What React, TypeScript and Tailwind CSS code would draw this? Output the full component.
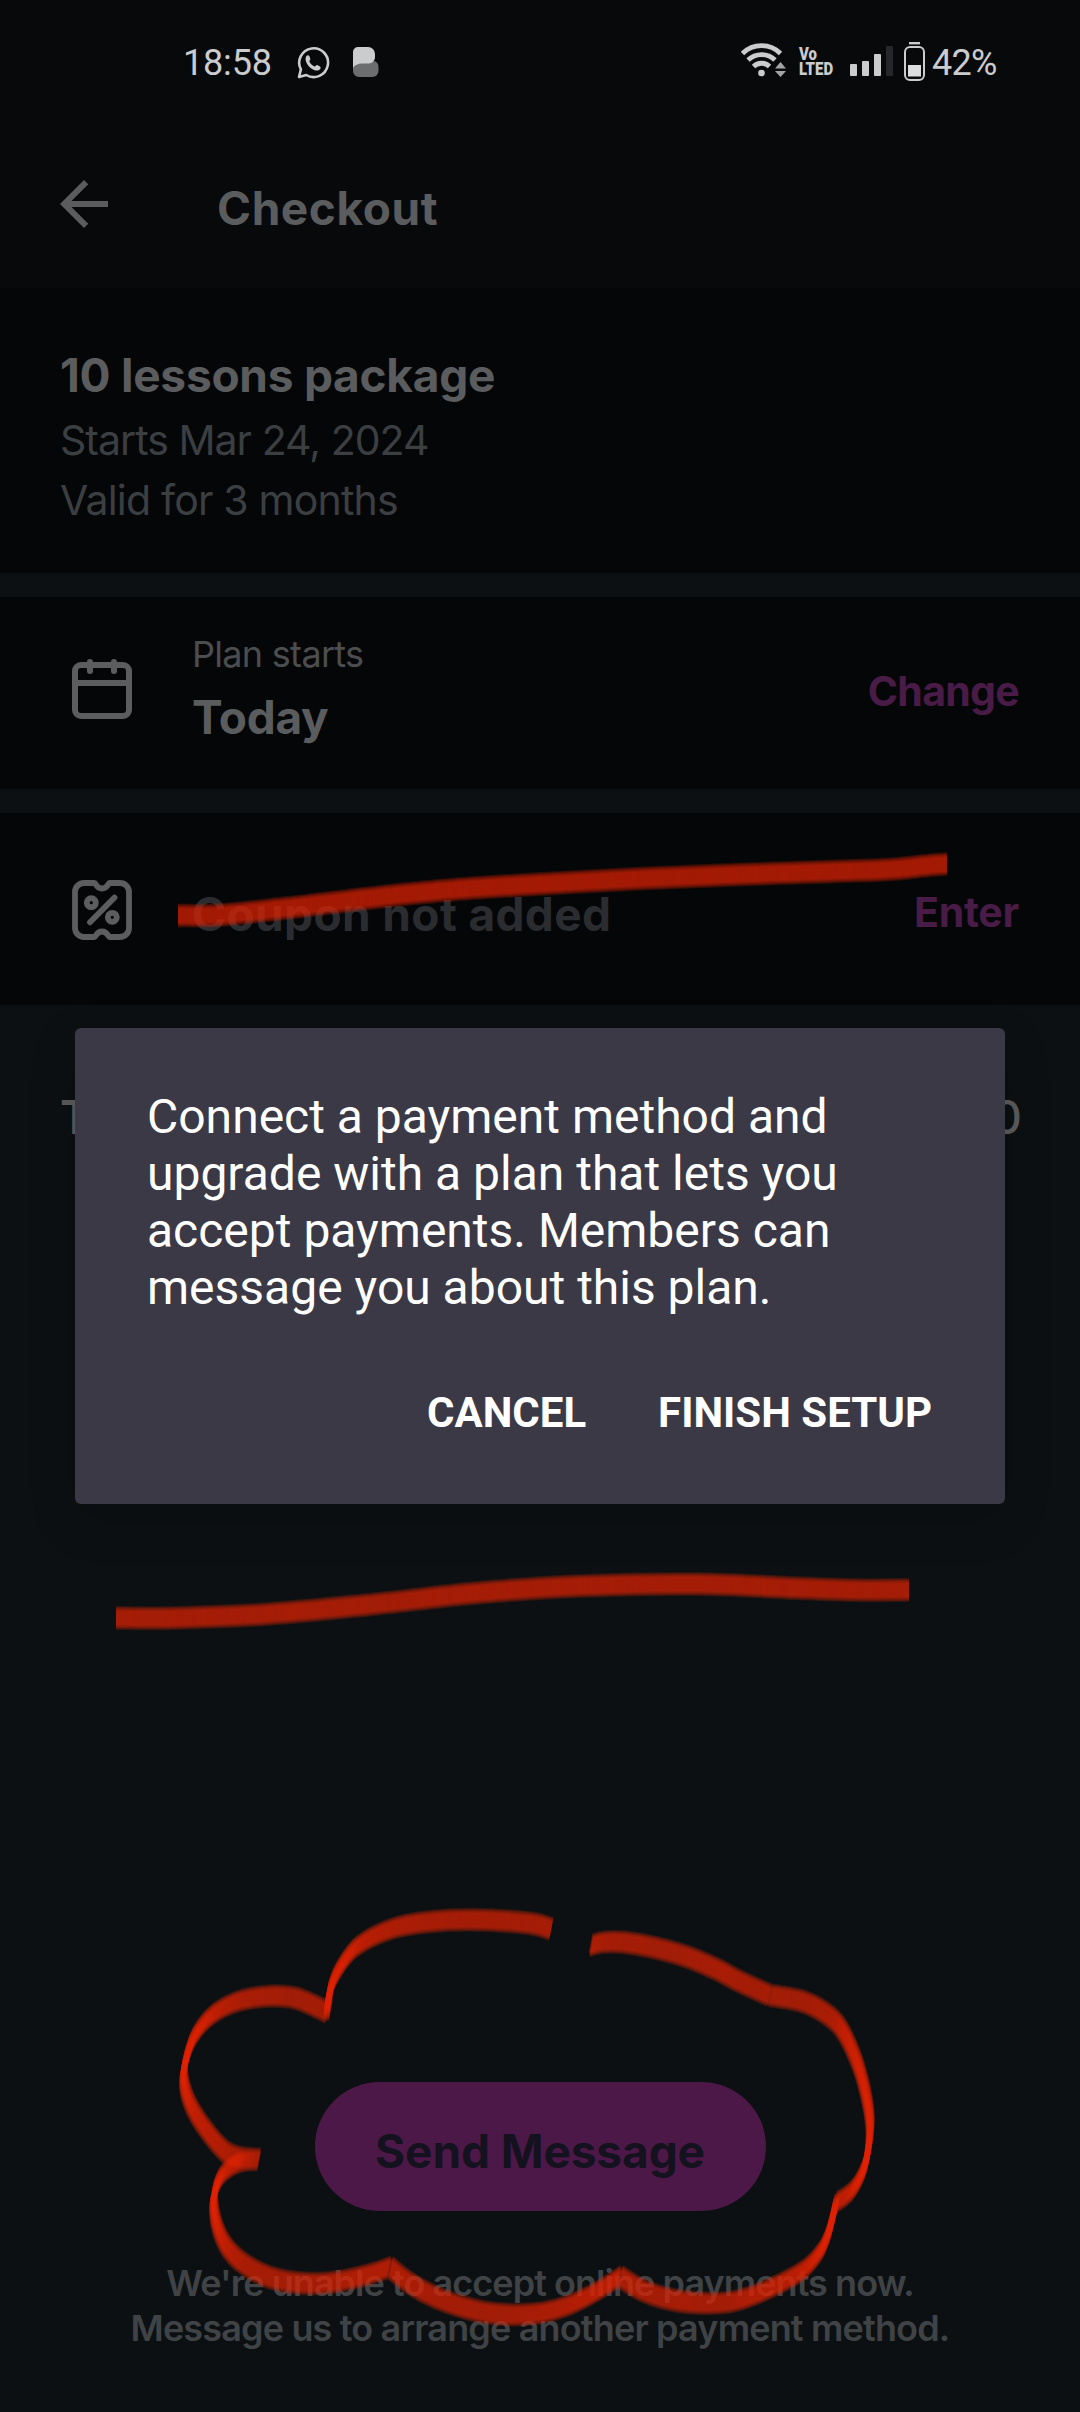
import React from "react";
import { MdArrowBack } from "react-icons/md";

type Pt = [number, number];

/** Smooth path through a list of points. */
function smooth(p: Pt[]): string {
  let d = `M${p[0][0]} ${p[0][1]}`;
  for (let i = 0; i < p.length - 1; i++) {
    const a = p[i - 1] ?? p[i];
    const b = p[i];
    const c = p[i + 1];
    const e = p[i + 2] ?? c;
    d += `C${b[0] + (c[0] - a[0]) / 6} ${b[1] + (c[1] - a[1]) / 6} ${c[0] - (e[0] - b[0]) / 6} ${c[1] - (e[1] - b[1]) / 6} ${c[0]} ${c[1]}`;
  }
  return d;
}

const left = (p: Pt[]): Pt[] => p.map(([x, y]) => [160 + x / 3, 1880 + y / 3]);
const right = (p: Pt[]): Pt[] => p.map(([x, y]) => [540 + x / 3, 1880 + y / 3]);

const couponMark = smooth([
  [178, 915.5], [220, 915], [296, 907], [379, 897], [455, 889.5], [540, 884], [643, 878.5],
  [740, 874.5], [833, 871.5], [889, 869.5], [928, 865.5], [947, 864],
]);

const underline = smooth([
  [116, 1618], [176, 1618], [268, 1614], [366, 1605], [476, 1593], [580, 1586],
  [697, 1584], [795, 1588], [850, 1590], [909, 1590],
]);

const cloud = [
  left([[1174, 147], [1110, 130], [935, 119], [800, 126], [690, 148], [590, 200], [535, 270], [510, 330], [503, 396]]),
  left([[503, 396], [410, 355], [335, 348], [240, 362], [160, 402], [105, 465], [77, 540], [71, 600], [90, 670], [135, 745], [195, 814], [240, 833], [297, 838]]),
  left([[297, 838], [240, 846], [190, 880], [165, 930], [161, 980], [172, 1040], [200, 1100], [250, 1150], [330, 1192], [430, 1210], [530, 1205], [620, 1185], [690, 1162]]),
  left([[690, 1162], [750, 1210], [830, 1253], [950, 1292], [1050, 1304], [1140, 1299], [1220, 1278], [1300, 1240], [1380, 1190]]),
  right([[240, 1190], [310, 1232], [400, 1260], [500, 1270], [590, 1262], [690, 1225], [790, 1170], [840, 1115], [865, 1060], [888, 968]]),
  right([[888, 968], [935, 932], [970, 870], [986, 800], [990, 725], [975, 630], [945, 530], [900, 440], [850, 395], [780, 362], [690, 346]]),
  right([[690, 346], [600, 305], [530, 268], [440, 230], [340, 202], [250, 187], [190, 187], [153, 196]]),
].map(smooth).join("");

const nib = Array.from({ length: 19 }, (_, i) => i - 9);

/** Flat-nib marker: translucent passes shifted along the nib. */
function Marker({ d, slant }: { d: string; slant: number }) {
  return (
    <g>
      {nib.map((n) => (
        <path
          key={n}
          d={d}
          transform={`translate(${-n * slant} ${n})`}
          stroke="#e32604"
          strokeWidth="6"
          strokeOpacity="0.19"
          strokeLinejoin="round"
        />
      ))}
    </g>
  );
}

function StatusBar() {
  return (
    <div className="flex h-[126px] items-center pl-[183px] font-[Roboto,sans-serif] text-[36px] leading-[42px] text-[#cbccce]">
      <span className="w-[114px] tracking-[-0.18px]">18:58</span>
      <svg className="mb-[2px] h-[33px] w-[33px]" viewBox="0 0 33 33" fill="none">
        <path d="M2 31l1.9-7.6A14.4 14.4 0 1 1 9.2 29z" stroke="currentColor" strokeWidth="2.6" strokeLinejoin="round" />
        <path d="M9.1 10.4c.9-1.5 2.6-1.7 3.2-.4l1 2.7c.4 1-1.3 2-.9 2.9 1.1 2.4 2.7 3.9 5 4.8.9.3 1.9-1.7 2.9-1.3l2.6 1.3c1.4.7.7 2.6-.8 3.5-2.2 1.3-5.4.5-8.7-2.2C9.8 18.8 7.5 13.6 9.1 10.4z" fill="currentColor" />
      </svg>
      <svg className="mb-[2px] ml-[23px] h-[30px] w-[26px]" viewBox="0 0 26 30">
        <path d="M18 14h2.5a5.5 5.5 0 0 1 5 5.5v4.5a6 6 0 0 1-6 6H6a6 6 0 0 1-6-6v-6z" fill="#6c6d6f" />
        <path d="M0 5a5 5 0 0 1 5-5h10a7 7 0 0 1 7 7v3c0 3.5-2.5 6.5-6.5 6.5H10C5 16.5 1.5 18 0 21z" fill="#cbccce" />
      </svg>
      <svg className="mb-[6px] ml-[362px] h-[36px] w-[45px]" viewBox="0 0 45 36" fill="none">
        <path d="M1.5 11.5a27 27 0 0 1 38 0M7 18a19.5 19.5 0 0 1 27 0M12.5 24.5a11.5 11.5 0 0 1 16 0" stroke="currentColor" strokeWidth="4.8" />
        <circle cx="20.5" cy="31" r="3.3" fill="currentColor" />
        <path d="M34 26.5h11l-5.5-6.5zM34 29h11l-5.5 6z" fill="#a3a4a6" />
      </svg>
      <span className="mb-[4px] ml-[13px] flex w-[52px] origin-left scale-x-[0.83] flex-col text-[18px] leading-[15px] font-black">
        <span>Vo</span>
        <span>LTED</span>
      </span>
      <span className="mb-[4px] -ml-px flex h-[30px] items-end gap-[5px]">
        <span className="h-[12px] w-[7px] rounded-[1px] bg-[#cbccce]" />
        <span className="h-[15px] w-[7px] rounded-[1px] bg-[#cbccce]" />
        <span className="h-[22px] w-[7px] rounded-[1px] bg-[#cbccce]" />
        <span className="h-[30px] w-[7px] rounded-[1px] bg-[#26272a]" />
      </span>
      <svg className="mb-[3px] ml-[11px] h-[39px] w-[21px]" viewBox="0 0 21 39" fill="none">
        <path d="M5 1.2h11" stroke="currentColor" strokeWidth="2.4" />
        <rect x="1" y="5" width="19" height="33" rx="5" stroke="currentColor" strokeWidth="2" />
        <path d="M4 23h13v11.5H4z" fill="#dcddde" />
      </svg>
      <span className="ml-[7px] tracking-[-0.7px]">42%</span>
    </div>
  );
}

function CalendarIcon() {
  return (
    <svg className="mt-[62px] h-[60px] w-[60px]" viewBox="0 0 60 60" fill="none" stroke="#5c5d5f" strokeWidth="6">
      <rect x="3" y="6" width="54" height="51" rx="6" />
      <path d="M3 24h54" />
      <path d="M18 3v9M42 3v9" strokeLinecap="round" />
    </svg>
  );
}

function CouponIcon() {
  return (
    <svg className="mt-[67px] h-[60px] w-[60px]" viewBox="0 0 60 60" fill="none" stroke="#5c5d5f" strokeWidth="5.8">
      <path
        strokeLinejoin="round"
        d="M12 3h10.5c1.5 0 1.5 5.5 7.5 5.5S36 3 37.5 3H48a9 9 0 0 1 9 9v36a9 9 0 0 1-9 9H37.5c-1.5 0-1.5-5.5-7.5-5.5S24 57 22.5 57H12a9 9 0 0 1-9-9V12a9 9 0 0 1 9-9z"
      />
      <circle cx="19.3" cy="22.7" r="4.5" />
      <circle cx="40.3" cy="37.3" r="4.5" />
      <path d="M42.5 17.5L18 42.3" strokeLinecap="round" />
    </svg>
  );
}

export default function App() {
  return (
    <div className="relative flex h-[2412px] w-[1080px] flex-col overflow-hidden bg-[#0c1012] font-[Inter,sans-serif] whitespace-nowrap">
      <header className="h-[288px] bg-[#08090b]">
        <StatusBar />
        <div className="flex h-[162px] items-center gap-[97px] pb-[6px] pl-12 text-[#5b5c5e]">
          <MdArrowBack className="h-[72px] w-[72px]" />
          <h1 className="mt-2 text-[46px] leading-[56px] font-bold tracking-[0.6px]">Checkout</h1>
        </div>
      </header>

      <section className="h-[285px] bg-[#050608] px-[60px] pt-[59px] text-[41px] leading-[60px] text-[#3c3f42]">
        <h2 className="mb-[7px] text-[46px] leading-[56px] font-bold tracking-[-0.25px] text-[#5b5c5e]">10 lessons package</h2>
        <p className="tracking-[-0.96px]">Starts Mar 24, 2024</p>
        <p className="tracking-[-0.79px]">Valid for 3 months</p>
      </section>

      <section className="mt-6 flex h-[192px] items-start bg-[#050608] pr-[61px] pl-[72px]">
        <CalendarIcon />
        <div className="ml-[60px] flex-1 pt-[35px]">
          <p className="text-[36px] leading-[44px] tracking-[-0.7px] text-[#4c4d4e]">Plan starts</p>
          <p className="mt-[13px] text-[46px] leading-[56px] font-bold tracking-[-0.3px] text-[#5b5c5e]">Today</p>
        </div>
        <button className="mt-[69px] text-[41px] leading-[50px] font-bold tracking-[-0.7px] text-[#491b47]">Change</button>
      </section>

      <section className="mt-6 flex h-[192px] items-start bg-[#050608] pr-[61px] pl-[72px]">
        <CouponIcon />
        <p className="mt-[73px] ml-[60px] flex-1 text-[46px] leading-[56px] font-bold tracking-[0.38px] text-[#2a2c30]">
          Coupon not added
        </p>
        <button className="mt-[74px] text-[41px] leading-[50px] font-bold tracking-[-0.25px] text-[#491b47]">Enter</button>
      </section>

      <div className="mt-[84px] flex justify-between pr-[58px] pl-[60px] text-[46px] leading-[56px] font-medium text-[#5c5c5c]">
        <span className="font-semibold">Total</span>
        <span>0</span>
      </div>

      <footer className="mt-auto flex flex-col items-center pb-[61px]">
        <button className="h-[129px] w-[451px] rounded-full bg-[#4c1848] pt-[9px] text-[46px] leading-[56px] font-bold tracking-[-0.1px] text-[#14121e]">
          Send Message
        </button>
        <div className="mt-[50px] text-center text-[36px] leading-[45px] font-semibold text-[#3f4346]">
          <p className="tracking-[-0.95px]">We're unable to accept online payments now.</p>
          <p className="tracking-[-0.84px]">Message us to arrange another payment method.</p>
        </div>
      </footer>

      <div className="absolute inset-0 px-[75px] pt-[1028px] font-[Roboto,sans-serif] text-white">
        <div role="dialog" className="h-[476px] rounded-[6px] bg-[#3c3946] px-[72px] pt-[60px] shadow-[0_16px_48px_rgba(0,0,0,0.16)]">
          <p className="text-[48px] leading-[57px]">
            Connect a payment method and
            <br />
            upgrade with a plan that lets you
            <br />
            accept payments. Members can
            <br />
            message you about this plan.
          </p>
          <div className="mt-[72px] mr-px flex justify-end gap-[72px] text-[42px] leading-[49px] font-bold">
            <button>CANCEL</button>
            <button>FINISH SETUP</button>
          </div>
        </div>
      </div>

      <svg className="pointer-events-none absolute inset-0 h-full w-full" viewBox="0 0 1080 2412" fill="none">
        <Marker d={couponMark} slant={0} />
        <Marker d={underline} slant={0} />
        <Marker d={cloud} slant={0.19} />
      </svg>
    </div>
  );
}
